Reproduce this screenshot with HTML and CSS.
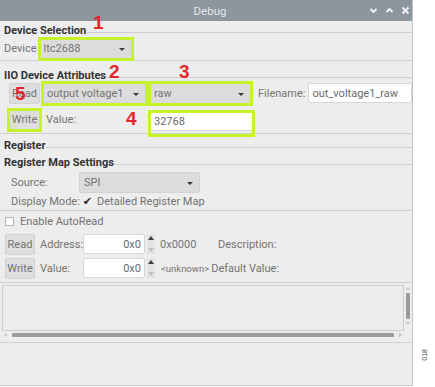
FILE: index.html
```html
<!DOCTYPE html>
<html>
<head>
<meta charset="utf-8">
<link rel="stylesheet" href="styles.css">
</head>
<body>
<div class="page">
  <div class="window">
    <div class="titlebar">
      <span class="title">Debug</span>
      <div class="winctl">
        <svg width="9" height="7" viewBox="0 0 9 7"><polyline points="1.5,2 4.5,5 7.5,2" fill="none" stroke="#f4f6f8" stroke-width="1.8"/></svg>
        <svg width="9" height="7" viewBox="0 0 9 7"><polyline points="1.5,5 4.5,2 7.5,5" fill="none" stroke="#f4f6f8" stroke-width="1.8"/></svg>
        <svg width="9" height="9" viewBox="0 0 9 9"><path d="M1.5 1.5 L7.5 7.5 M7.5 1.5 L1.5 7.5" stroke="#f4f6f8" stroke-width="1.9"/></svg>
      </div>
    </div>

    <div class="content">
      <div class="heading h-dev"><span>Device Selection</span><i class="hline"></i><b class="num n1">1</b></div>
      <div class="row row-dev">
        <span class="lbl">Device</span>
        <div class="combo c-dev mark m1"><span>ltc2688</span><i class="arrow"></i></div>
      </div>
      <div class="sep s1"></div>

      <div class="heading h-iio"><span>IIO Device Attributes</span><i class="hline"></i><b class="num n2">2</b><b class="num n3">3</b></div>
      <div class="iio">
        <div class="btn b-read">Read<b class="num n5">5</b></div>
        <div class="combo c-attr mark m2"><span>output voltage1</span><i class="arrow"></i></div>
        <div class="combo c-raw mark m3"><span>raw</span><i class="arrow"></i></div>
        <span class="lbl fname">Filename:</span>
        <div class="input i-fname">out_voltage1_raw</div>

        <div class="btn b-write mark m5">Write</div>
        <span class="lbl val">Value:<b class="num n4">4</b></span>
        <div class="input i-val mark m4">32768</div>
      </div>
      <div class="sep s2"></div>

      <div class="heading h-reg"><span>Register</span><i class="hline"></i></div>
      <div class="heading h-map"><span>Register Map Settings</span><i class="hline"></i></div>
      <div class="row row-src">
        <span class="lbl src-l">Source:</span>
        <div class="combo c-spi"><span>SPI</span><i class="arrow"></i></div>
      </div>
      <div class="row row-mode">
        <span class="lbl">Display Mode:</span>
        <span class="check">✔</span>
        <span class="lbl">Detailed Register Map</span>
      </div>
      <div class="sep s3"></div>

      <div class="row row-auto">
        <i class="cbox"></i><span class="lbl">Enable AutoRead</span>
      </div>
      <div class="row row-rr">
        <div class="btn b-r2">Read</div>
        <span class="lbl addr-l">Address:</span>
        <div class="input spin-in">0x0</div>
        <div class="spin"><i class="up"></i><i class="dn"></i></div>
        <span class="lbl hexv">0x0000</span>
        <span class="lbl">Description:</span>
      </div>
      <div class="row row-rw">
        <div class="btn b-w2">Write</div>
        <span class="lbl addr-l">Value:</span>
        <div class="input spin-in">0x0</div>
        <div class="spin"><i class="up"></i><i class="dn"></i></div>
        <span class="lbl unk">&lt;unknown&gt;</span>
        <span class="lbl">Default Value:</span>
      </div>
      <div class="sep s4"></div>

      <div class="textarea">
        <div class="ta-box"></div>
        <div class="vscroll"><i class="sa up"></i><i class="vthumb"></i><i class="sa dn"></i></div>
        <div class="hscroll"><i class="sa lf"></i><i class="hthumb"></i><i class="sa rt"></i></div>
        <div class="corner"></div>
      </div>
      <div class="blank"></div>
    </div>
  </div>
  <div class="side"><span class="figno">018</span></div>
</div>
</body>
</html>
```

FILE: styles.css
```css
* { box-sizing: border-box; }
html, body { margin: 0; padding: 0; background: #ffffff; }
body {
  font-family: Roboto, "Liberation Sans", sans-serif;
  font-size: 11px;
  color: #737373;
}
.page { display: flex; width: 435px; height: 387px; }
.window {
  width: 413px;
  height: 386px;
  background: #ededed;
  border-right: 1px solid #c4c4c4;
  border-bottom: 1px solid #c4c4c4;
  display: flex;
  flex-direction: column;
}
.titlebar {
  height: 21px;
  background: #8d969e;
  display: flex;
  align-items: center;
  position: relative;
  flex: none;
}
.title {
  flex: 1;
  text-align: center;
  color: #e3e6e9;
  font-size: 11.5px;
  padding-left: 8px;
}
.winctl {
  position: absolute;
  right: 2px;
  top: 6px;
  display: flex;
  gap: 7px;
  align-items: center;
}
.content { display: flex; flex-direction: column; flex: 1; position: relative; }

.heading {
  display: flex;
  align-items: center;
  font-weight: bold;
  color: #333333;
  line-height: 12px;
  padding-left: 4px;
  position: relative;
}
.heading .hline { flex: 1; height: 1px; background: #cfcfcf; margin-top: 3px; }
.h-dev { height: 16px; padding-top: 4px; }
.h-iio { height: 21px; padding-top: 8px; }
.h-reg { height: 18px; padding-top: 6px; }
.h-map { height: 18px; padding-top: 4px; }

.row { display: flex; align-items: center; }
.row-dev { height: 22px; padding-left: 4px; gap: 3px; }
.sep { height: 1px; background: #cfcfcf; flex: none; }
.s1 { margin-top: 1px; }
.s2 { margin-top: 3px; }
.s3 { margin-top: 0; }
.s4 { margin-top: 3px; }

.combo {
  height: 21px;
  background: #dcdcdc;
  border: 1px solid #d3d3d3;
  border-radius: 2px;
  display: flex;
  align-items: center;
  padding: 0 6px 0 3px;
  color: #737373;
  position: relative;
}
.combo span { flex: 1; }
.arrow {
  width: 0; height: 0;
  border-left: 3px solid transparent;
  border-right: 3px solid transparent;
  border-top: 3px solid #3a3a3a;
  margin-top: 2px;
}
.c-dev { width: 92px; }

.iio {
  display: grid;
  grid-template-columns: 31px 103px 101px auto 104px;
  grid-template-rows: 22px 22px;
  column-gap: 3px;
  row-gap: 4px;
  padding-left: 9px;
  align-items: center;
}
.c-attr { grid-column: 2; height: 21px; }
.c-raw { grid-column: 3; margin-left: 1px; width: 101px; }
.fname { grid-column: 4; padding-left: 5px; }
.i-fname { grid-column: 5; }
.b-write { grid-column: 1; grid-row: 2; height: 22px; }
.val { grid-column: 2; grid-row: 2; padding-left: 3px; position: relative; }
.i-val { grid-column: 3; grid-row: 2; margin-left: 1px; width: 103px; height: 19px; margin-top: 4px; }

.btn {
  height: 21px;
  background: #dedede;
  border: 1px solid #d2d2d2;
  border-radius: 2px;
  display: flex;
  align-items: center;
  justify-content: center;
  color: #737373;
  position: relative;
}
.input {
  height: 20px;
  background: #ffffff;
  border: 1px solid #d6d6d6;
  border-radius: 2px;
  display: flex;
  align-items: center;
  padding: 0 3px;
  color: #6a6a6a;
}

.row-src { height: 22px; padding-left: 11px; margin-top: 1px; }
.src-l { width: 68px; }
.c-spi { width: 121px; padding-left: 4px; }
.row-mode { height: 17px; padding-left: 11px; }
.check { color: #2a2a2a; font-size: 11px; margin: 0 5px 0 3px; font-family: "DejaVu Sans", sans-serif; }
.row-auto { height: 21px; padding-left: 5px; }
.cbox { width: 9px; height: 9px; background: #fff; border: 1px solid #b4b4b4; margin-right: 6px; }
.row-rr { height: 22px; padding-left: 5px; margin-top: 1px; }
.row-rw { height: 22px; padding-left: 5px; margin-top: 2px; }
.b-r2, .b-w2 { width: 30px; height: 21px; }
.addr-l { width: 48px; padding-left: 5px; }
.spin-in { width: 62px; justify-content: flex-end; padding-right: 3px; }
.spin { width: 8px; height: 20px; display: flex; flex-direction: column; justify-content: space-between; align-items: center; margin: 0 5px 0 2px; padding: 2px 0; background: #e4e4e4; }
.spin .up { width: 0; height: 0; border-left: 3px solid transparent; border-right: 3px solid transparent; border-bottom: 4px solid #3c3c3c; }
.spin .dn { width: 0; height: 0; border-left: 3px solid transparent; border-right: 3px solid transparent; border-top: 4px solid #c0c0c0; }
.hexv { width: 58px; }
.unk { font-size: 9.5px; margin-left: 1px; margin-right: 2px; }

.textarea {
  margin-top: 2px;
  margin-left: 2px;
  display: grid;
  grid-template-columns: 402px 8px;
  grid-template-rows: 46px 8px;
  height: 55px;
}
.ta-box { background: #ececec; border: 1px solid #cdcdcd; }
.vscroll { display: flex; flex-direction: column; align-items: center; padding: 2px 0; justify-content: flex-start; }
.vthumb { width: 4px; height: 26px; background: #9b9b9b; border-radius: 1px; margin: 3px 0; flex: none; }
.hscroll { display: flex; align-items: center; padding: 0 2px; }
.hthumb { flex: 1; height: 4px; background: #9b9b9b; border-radius: 1px; margin: 0 5px; }
.sa { width: 0; height: 0; }
.vscroll .up { border-left: 2px solid transparent; border-right: 2px solid transparent; border-bottom: 3px solid #c2c2c2; }
.vscroll .dn { border-left: 2px solid transparent; border-right: 2px solid transparent; border-top: 3px solid #c2c2c2; }
.hscroll .lf { border-top: 2px solid transparent; border-bottom: 2px solid transparent; border-right: 3px solid #c2c2c2; }
.hscroll .rt { border-top: 2px solid transparent; border-bottom: 2px solid transparent; border-left: 3px solid #c2c2c2; }
.blank { flex: 1; border-top: 1px solid #d2d2d2; margin-top: 2px; }

.side { flex: 1; display: flex; align-items: flex-end; justify-content: center; padding-bottom: 26px; }
.figno { writing-mode: vertical-rl; transform: rotate(180deg); font-family: "Liberation Sans", Arial, sans-serif; font-size: 7px; color: #444; }

/* annotations */
.mark { position: relative; }
.mark::after {
  content: "";
  position: absolute;
  border: 3px solid #c6f22c;
  pointer-events: none;
}
.m1::after { left: -3px; right: -3px; top: -2px; bottom: -3px; }
.m2::after { left: -3px; right: -3px; top: -3px; bottom: -3px; }
.m3::after { left: -3px; right: -3px; top: -3px; bottom: -3px; }
.m4::after { left: -3px; right: -3px; top: -2px; bottom: -7px; }
.m5::after { left: -3px; right: -3px; top: -2px; bottom: -3px; }

.num {
  position: absolute;
  color: #e5262b;
  font-family: "Liberation Sans", Arial, sans-serif;
  font-weight: bold;
  font-size: 19px;
  line-height: 19px;
  z-index: 2;
}
.n1 { left: 93px; top: -8px; }
.n2 { left: 109px; top: 1px; }
.n3 { left: 179px; top: 1px; }
.n4 { left: 83px; top: -4px; }
.n5 { left: 5px; top: 0px; }
```
